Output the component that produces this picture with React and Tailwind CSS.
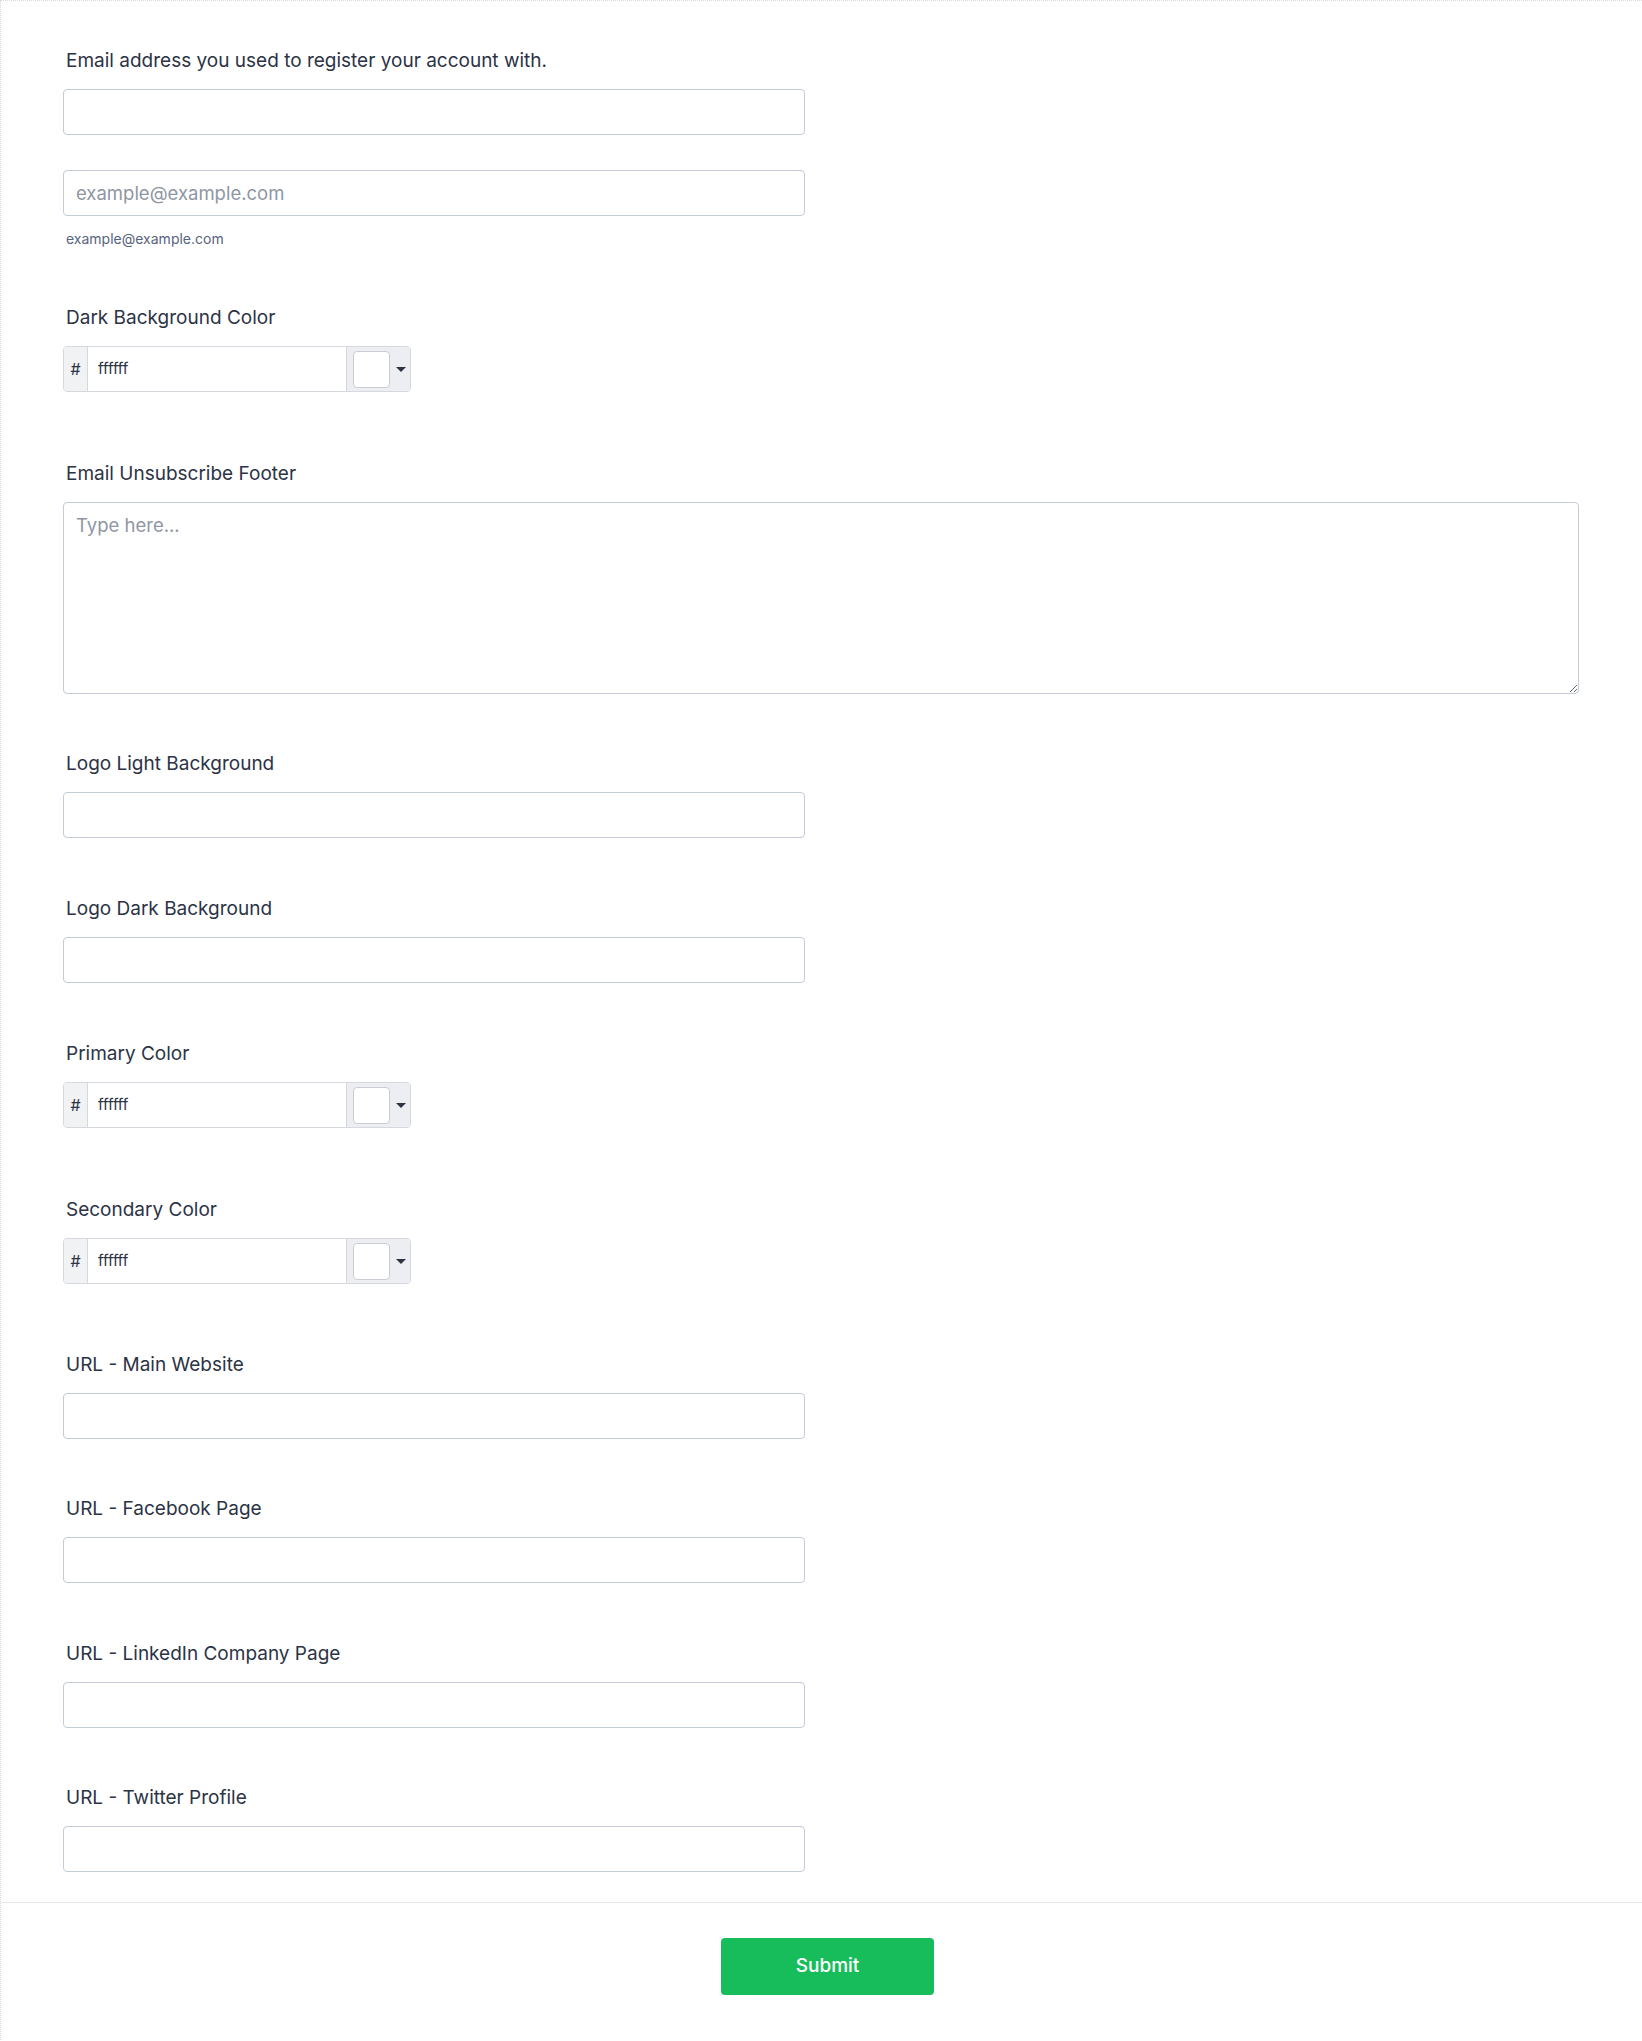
import React from "react";

const font = { fontFamily: "Inter, 'Noto Sans', sans-serif" };

function Label({ children }) {
  return (
    <div className="pl-[3px] h-[25px] leading-[25px] text-[19px] text-[#2c3345]">{children}</div>
  );
}

function TextInput({ placeholder }) {
  return (
    <input
      type="text"
      placeholder={placeholder || ""}
      className="block w-[742px] h-[46px] rounded-[4px] border border-[#c3cad8] bg-white px-3 text-[18.5px] text-[#2c3345] placeholder:text-[#8f96a3] outline-none"
      style={font}
    />
  );
}

function ColorInput() {
  return (
    <div className="flex w-[348px] h-[46px] rounded-[4px] border border-[#d5d8df] overflow-hidden bg-white">
      <div className="w-[24px] flex items-center justify-center bg-[#f1f2f4] border-r border-[#d5d8df] text-[16px] text-[#2c3345]">#</div>
      <div className="flex-1 flex items-center pl-[10px] text-[15px] text-[#2c3345]">ffffff</div>
      <div className="w-[64px] flex items-center bg-[#eceef2] border-l border-[#d5d8df] pl-[6px]">
        <div className="w-[37px] h-[37px] rounded-[4px] bg-white border border-[#c9ccd4]"></div>
        <svg width="10" height="6" viewBox="0 0 10 6" className="ml-[6px] mt-[2px]">
          <path d="M0 0 L10 0 L5 5 Z" fill="#2c3345" />
        </svg>
      </div>
    </div>
  );
}

function Field({ label, gap = "pb-[58px]", children }) {
  return (
    <div className={gap}>
      <Label>{label}</Label>
      <div className="mt-4">{children}</div>
    </div>
  );
}

export default function App() {
  return (
    <div className="w-full min-h-[2041px] bg-white border-l border-t border-dotted border-[#d9d9d9]" style={font}>
      <div className="pl-[62px] pt-[47px]">
        <div className="pb-[58px]">
          <Label>Email address you used to register your account with.</Label>
          <div className="mt-4">
            <TextInput />
          </div>
          <div className="mt-[35px]">
            <TextInput placeholder="example@example.com" />
          </div>
          <div className="mt-[15px] pl-[3px] h-[16px] leading-[16px] text-[14px] text-[#57647e]">example@example.com</div>
        </div>

        <Field label="Dark Background Color" gap="pb-[69px]">
          <ColorInput />
        </Field>

        <Field label="Email Unsubscribe Footer" gap="pb-[57px]">
          <textarea
            placeholder="Type here..."
            className="block w-[1516px] h-[192px] rounded-[4px] border border-[#c3cad8] bg-white px-3 pt-[9px] text-[18.5px] text-[#2c3345] placeholder:text-[#8f96a3] outline-none"
            style={font}
          />
        </Field>

        <Field label="Logo Light Background">
          <TextInput />
        </Field>
        <Field label="Logo Dark Background">
          <TextInput />
        </Field>
        <Field label="Primary Color" gap="pb-[69px]">
          <ColorInput />
        </Field>
        <Field label="Secondary Color" gap="pb-[68px]">
          <ColorInput />
        </Field>
        <Field label="URL - Main Website" gap="pb-[57px]">
          <TextInput />
        </Field>
        <Field label="URL - Facebook Page">
          <TextInput />
        </Field>
        <Field label="URL - LinkedIn Company Page" gap="pb-[57px]">
          <TextInput />
        </Field>
        <Field label="URL - Twitter Profile" gap="pb-[30px]">
          <TextInput />
        </Field>
      </div>
      <div className="border-t border-[#e3e5e8] pt-[35px] pb-[47px] flex justify-center pl-[12px]">
        <button className="w-[213px] h-[57px] rounded-[4px] bg-[#18bd5b] text-white text-[19px] font-medium" style={font}>
          Submit
        </button>
      </div>
    </div>
  );
}
